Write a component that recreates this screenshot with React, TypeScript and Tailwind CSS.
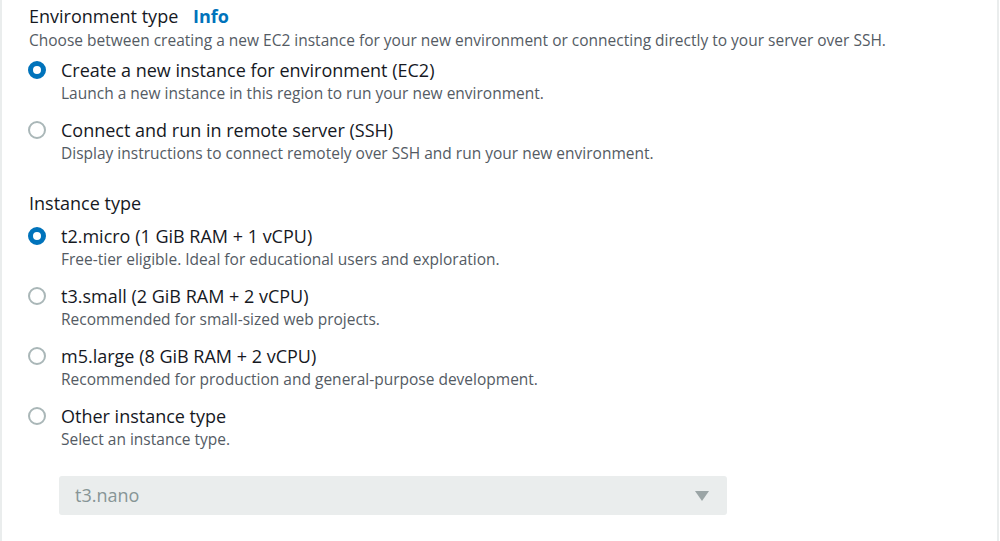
import React from 'react';

type Option = { label: string; desc: string; checked?: boolean };

const envOptions: Option[] = [
  { label: 'Create a new instance for environment (EC2)', desc: 'Launch a new instance in this region to run your new environment.', checked: true },
  { label: 'Connect and run in remote server (SSH)', desc: 'Display instructions to connect remotely over SSH and run your new environment.' },
];

const instanceOptions: Option[] = [
  { label: 't2.micro (1 GiB RAM + 1 vCPU)', desc: 'Free-tier eligible. Ideal for educational users and exploration.', checked: true },
  { label: 't3.small (2 GiB RAM + 2 vCPU)', desc: 'Recommended for small-sized web projects.' },
  { label: 'm5.large (8 GiB RAM + 2 vCPU)', desc: 'Recommended for production and general-purpose development.' },
  { label: 'Other instance type', desc: 'Select an instance type.' },
];

const Radio: React.FC<{ checked?: boolean }> = ({ checked }) =>
  checked ? (
    <span className="mt-[3px] w-[18px] h-[18px] rounded-full border-[5px] border-[#0073bb] bg-white flex-shrink-0" />
  ) : (
    <span className="mt-[3px] w-[18px] h-[18px] rounded-full border-2 border-[#aab7b8] bg-white flex-shrink-0" />
  );

const RadioGroup: React.FC<{ options: Option[] }> = ({ options }) => (
  <div className="flex flex-col gap-[14px]">
    {options.map((o) => (
      <div key={o.label} className="flex gap-[15px] -ml-[1px]">
        <Radio checked={o.checked} />
        <div>
          <div className="text-[18px] leading-[24px] text-[#16191f]">{o.label}</div>
          <div className="text-[15.5px] leading-[22px] text-[#545b64]">{o.desc}</div>
        </div>
      </div>
    ))}
  </div>
);

const App: React.FC = () => {
  return (
    <div className="w-[1000px] h-[541px] bg-white overflow-hidden font-['Open_Sans',sans-serif]">
      <div className="h-full w-[999px] border-l-2 border-r-2 border-[#eaeded] pl-[27px] pt-[4px]">
        <div className="text-[18px] leading-[24px] text-[#16191f]">
          Environment type <span className="ml-[10px] font-bold text-[#0073bb]">Info</span>
        </div>
        <div className="mt-[1px] text-[15.5px] leading-[22px] text-[#545b64]">
          Choose between creating a new EC2 instance for your new environment or connecting directly to your server over SSH.
        </div>
        <div className="mt-[7px]">
          <RadioGroup options={envOptions} />
        </div>
        <div className="mt-[27px] text-[18px] leading-[24px] text-[#16191f]">Instance type</div>
        <div className="mt-[9px]">
          <RadioGroup options={instanceOptions} />
        </div>
        <div className="mt-[26px] ml-[30px] w-[668px] h-[39px] rounded-[3px] bg-[#eaeded] flex items-center justify-between pl-[16px] pr-[18px]">
          <span className="text-[18px] text-[#879596]">t3.nano</span>
          <svg width="14" height="10" viewBox="0 0 14 10">
            <path d="M0 0h14L7 10z" fill="#9ba5a6" />
          </svg>
        </div>
      </div>
    </div>
  );
};

export default App;
